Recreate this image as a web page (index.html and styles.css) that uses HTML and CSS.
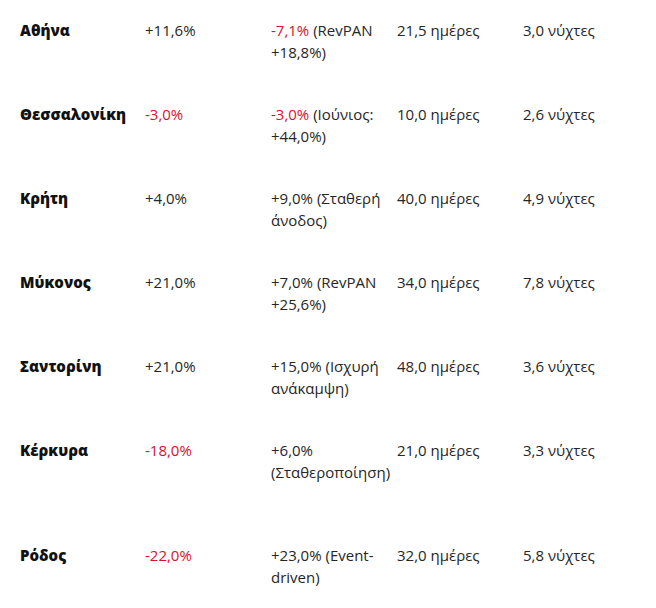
FILE: index.html
```html
<!DOCTYPE html>
<html lang="el">
<head>
<meta charset="utf-8">
<link rel="stylesheet" href="styles.css">
</head>
<body>
<div class="table">
  <div class="row">
    <div class="cell name">Αθήνα</div>
    <div class="cell">+11,6%</div>
    <div class="cell"><span class="neg">-7,1%</span> (RevPAN +18,8%)</div>
    <div class="cell">21,5 ημέρες</div>
    <div class="cell">3,0 νύχτες</div>
  </div>
  <div class="row">
    <div class="cell name">Θεσσαλονίκη</div>
    <div class="cell neg">-3,0%</div>
    <div class="cell"><span class="neg">-3,0%</span> (Ιούνιος: +44,0%)</div>
    <div class="cell">10,0 ημέρες</div>
    <div class="cell">2,6 νύχτες</div>
  </div>
  <div class="row">
    <div class="cell name">Κρήτη</div>
    <div class="cell">+4,0%</div>
    <div class="cell">+9,0% (Σταθερή άνοδος)</div>
    <div class="cell">40,0 ημέρες</div>
    <div class="cell">4,9 νύχτες</div>
  </div>
  <div class="row">
    <div class="cell name">Μύκονος</div>
    <div class="cell">+21,0%</div>
    <div class="cell">+7,0% (RevPAN +25,6%)</div>
    <div class="cell">34,0 ημέρες</div>
    <div class="cell">7,8 νύχτες</div>
  </div>
  <div class="row">
    <div class="cell name">Σαντορίνη</div>
    <div class="cell">+21,0%</div>
    <div class="cell">+15,0% (Ισχυρή ανάκαμψη)</div>
    <div class="cell">48,0 ημέρες</div>
    <div class="cell">3,6 νύχτες</div>
  </div>
  <div class="row row-tall">
    <div class="cell name">Κέρκυρα</div>
    <div class="cell neg">-18,0%</div>
    <div class="cell">+6,0% (Σταθεροποίηση)</div>
    <div class="cell">21,0 ημέρες</div>
    <div class="cell">3,3 νύχτες</div>
  </div>
  <div class="row">
    <div class="cell name">Ρόδος</div>
    <div class="cell neg">-22,0%</div>
    <div class="cell">+23,0% (Event-driven)</div>
    <div class="cell">32,0 ημέρες</div>
    <div class="cell">5,8 νύχτες</div>
  </div>
</div>
</body>
</html>
```
FILE: styles.css
```css
html, body {
  margin: 0;
  padding: 0;
  background: #ffffff;
}
body {
  font-family: "Open Sans", "Noto Sans", "DejaVu Sans", sans-serif;
  font-size: 15px;
  line-height: 22px;
  color: #262626;
}
.table {
  padding-left: 20px;
}
.row {
  display: grid;
  grid-template-columns: 125px 126px 126px 126px 126px;
  padding: 19px 0 21px;
}
.row-tall {
  padding-bottom: 42px;
}
.cell {
  padding-right: 3px;
}
.name {
  font-weight: 800;
  color: #111111;
}
.neg {
  color: #d2142c;
}
```
